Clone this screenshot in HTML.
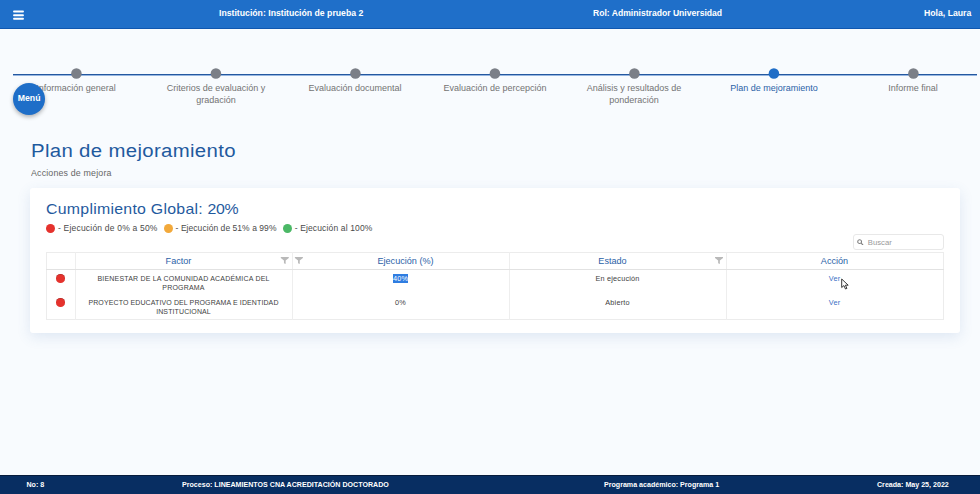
<!DOCTYPE html>
<html lang="es">
<head>
<meta charset="utf-8">
<title>Plan de mejoramiento</title>
<style>
*{box-sizing:border-box;margin:0;padding:0}
html,body{width:980px;height:494px;overflow:hidden}
body{background:#f8fbfe;font-family:"Liberation Sans",sans-serif;color:#444;position:relative}
.abs{position:absolute;white-space:nowrap}
#topbar{left:0;top:0;width:980px;height:28.8px;background:#1f6fc9;border-bottom:1px solid #0f57b0}
#topbar .t{position:absolute;top:0;height:27px;line-height:27px;color:#fff;font-size:8.7px;font-weight:700;white-space:nowrap}
#burger{left:13px;top:10px}
#line{left:13px;top:74px;width:963.5px;height:2px;background:linear-gradient(#2458a0 0,#2458a0 50%,rgba(70,125,200,.55) 50%,rgba(70,125,200,.55) 100%)}
.lbl{position:absolute;top:81.6px;width:140px;text-align:center;font-size:9px;line-height:12px;color:#737373;white-space:normal}
.lbl.on{color:#2b62a7}
#menu{left:13.1px;top:82.5px;width:32px;height:32px;border-radius:50%;background:#1e6ec8;box-shadow:0 2px 4px rgba(0,0,0,.3);color:#fff;font-size:8.7px;font-weight:700;text-align:center;line-height:31px}
#title{left:31px;top:138.8px;font-size:18px;line-height:24px;color:#1f5a9e;letter-spacing:.3px;transform:scaleX(1.131);transform-origin:0 0}
#sub{left:31px;top:168.7px;font-size:8.2px;line-height:10px;color:#666;letter-spacing:.15px;transform:scaleX(1.08);transform-origin:0 0}
#card{left:30px;top:188px;width:929.6px;height:144.7px;background:#fff;border-radius:3px;box-shadow:0 4px 14px rgba(70,110,180,.14)}
#h2{left:46px;top:200px;font-size:15px;line-height:18px;color:#1f5a9e;letter-spacing:.1px;transform:scaleX(1.058);transform-origin:0 0}
.lg{top:223.4px;font-size:8.5px;line-height:10px;color:#4a4a4a;letter-spacing:.2px}
.ld{position:absolute;width:9px;height:9px;border-radius:50%;top:223.5px}
#search{left:853px;top:234px;width:91px;height:15.6px;border:1px solid #e8e8e8;border-radius:3px;background:#fff}
#search span{position:absolute;left:13.8px;top:.6px;line-height:13.6px;font-size:7.7px;color:#999}
#tbl{left:46px;top:252px;width:898px;height:68px;border:1px solid #ececec}
.vl{position:absolute;top:252px;width:1px;height:68px;background:#eeeeee}
#hb{left:46px;top:268.6px;width:898px;height:1.6px;background:#e2e2e2}
.th{position:absolute;top:255px;font-size:9.1px;line-height:12px;color:#2b62a7;text-align:center;width:217px}
.td{position:absolute;font-size:7px;line-height:9px;color:#424242;text-align:center;width:217px;letter-spacing:.2px}
.td.m{font-size:7.3px}
.rd{position:absolute;left:56.2px;width:8.7px;height:8.7px;border-radius:50%;background:#e5322d;box-shadow:inset 0 .6px .5px rgba(90,20,20,.45)}
#footer{left:0;top:475px;width:980px;height:19px;background:#082e62;border-top:1.5px solid #071c3c}
#footer span{position:absolute;top:.9px;line-height:16.5px;font-size:7.1px;font-weight:700;color:#fff;white-space:nowrap}
</style>
</head>
<body>
<div id="topbar" class="abs">
  <svg id="burger" class="abs" width="12" height="11" viewBox="0 0 12 11"><rect x=".1" y=".5" width="10.8" height="2" rx=".8" fill="#fff"/><rect x=".1" y="4.2" width="10.8" height="2" rx=".8" fill="#fff"/><rect x=".1" y="7.8" width="10.8" height="2" rx=".8" fill="#fff"/></svg>
  <div class="t" id="t1" style="left:219px">Institución: Institución de prueba 2</div>
  <div class="t" id="t2" style="left:593px;font-size:8.6px">Rol: Administrador Universidad</div>
  <div class="t" id="t3" style="left:924px">Hola, Laura</div>
</div>

<div id="line" class="abs"></div>
<svg class="abs" style="left:0;top:0" width="980" height="120" viewBox="0 0 980 120"><circle cx="76.4" cy="73.55" r="5.25" fill="#7b7f87"/><circle cx="215.9" cy="73.55" r="5.25" fill="#7b7f87"/><circle cx="355.4" cy="73.55" r="5.25" fill="#7b7f87"/><circle cx="494.9" cy="73.55" r="5.25" fill="#7b7f87"/><circle cx="634.4" cy="73.55" r="5.25" fill="#7b7f87"/><circle cx="773.9" cy="73.55" r="5.25" fill="#1f6dc7"/><circle cx="913.4" cy="73.55" r="5.25" fill="#7b7f87"/></svg>
<div class="lbl" style="left:6px">Información general</div>
<div class="lbl" style="left:146px">Criterios de evaluación y gradación</div>
<div class="lbl" style="left:285px">Evaluación documental</div>
<div class="lbl" style="left:425px">Evaluación de percepción</div>
<div class="lbl" style="left:564px">Análisis y resultados de ponderación</div>
<div class="lbl on" style="left:704px">Plan de mejoramiento</div>
<div class="lbl" style="left:843px">Informe final</div>
<div id="menu" class="abs">Menú</div>

<div id="title" class="abs">Plan de mejoramiento</div>
<div id="sub" class="abs">Acciones de mejora</div>

<div id="card" class="abs"></div>
<div id="h2" class="abs"><span style="letter-spacing:.25px">Cumplimiento Global:</span> <span style="letter-spacing:-.35px">20%</span></div>
<div class="ld" style="left:45.5px;background:#e5322d"></div>
<div class="abs lg" id="l1" style="left:58px">- Ejecución de 0% a 50%</div>
<div class="ld" style="left:163.5px;background:#f2a93b"></div>
<div class="abs lg" id="l2" style="left:175.6px;letter-spacing:.05px">- Ejecución de 51% a 99%</div>
<div class="ld" style="left:283px;background:#4bb866"></div>
<div class="abs lg" id="l3" style="left:294.7px;letter-spacing:.14px">- Ejecución al 100%</div>

<div id="search" class="abs"><svg style="position:absolute;left:3px;top:3.6px" width="6.6" height="6.6" viewBox="0 0 8 8"><circle cx="3.2" cy="3.2" r="2.3" fill="none" stroke="#808080" stroke-width="1.3"/><path d="M5 5L7.3 7.3" stroke="#808080" stroke-width="1.4"/></svg><span>Buscar</span></div>

<div id="tbl" class="abs"></div>
<div class="vl" style="left:75px"></div>
<div class="vl" style="left:292px"></div>
<div class="vl" style="left:509px"></div>
<div class="vl" style="left:726px"></div>
<div id="hb" class="abs"></div>
<div class="th" style="left:70px">Factor</div>
<div class="th" style="left:297px">Ejecución (%)</div>
<div class="th" style="left:504px">Estado</div>
<div class="th" style="left:726px">Acción</div>

<div class="rd" style="top:274.2px"></div>
<div class="rd" style="top:298.4px"></div>
<div class="td" style="left:75px;top:274px;white-space:nowrap">BIENESTAR DE LA COMUNIDAD ACADÉMICA DEL<br>PROGRAMA</div>
<div class="td" style="left:75px;top:298px;white-space:nowrap;letter-spacing:.11px">PROYECTO EDUCATIVO DEL PROGRAMA E IDENTIDAD<br>INSTITUCIONAL</div>
<div class="td m" style="left:292px;top:274px"><span style="background:#2f7de1;color:#fff">40%</span></div>
<div class="td m" style="left:292px;top:298px">0%</div>
<div class="td m" style="left:509px;top:274px">En ejecución</div>
<div class="td m" style="left:509px;top:298px">Abierto</div>
<div class="td m" style="left:726px;top:274px;color:#3a6fc4">Ver</div>
<div class="td m" style="left:726px;top:298px;color:#3a6fc4">Ver</div>

<svg class="abs" style="left:0;top:0;pointer-events:none" width="980" height="494" viewBox="0 0 980 494">
<g fill="#b9b9b9">
<path transform="translate(280.8 256.9)" d="M0 0H8V1L4.85 3.7V7.1L3.15 6.3V3.7L0 1Z"/>
<path transform="translate(294.9 256.9)" d="M0 0H8V1L4.85 3.7V7.1L3.15 6.3V3.7L0 1Z"/>
<path transform="translate(715 256.9)" d="M0 0H8V1L4.85 3.7V7.1L3.15 6.3V3.7L0 1Z"/>
</g>
<path transform="translate(840.7 278)" d="M1 1V9.5L3.2 7.6L4.8 11L6.2 10.4L4.7 7.2H7.5Z" fill="#fff" stroke="#222" stroke-width=".9" stroke-linejoin="round"/>
</svg>

<div id="footer" class="abs">
  <span id="f1" style="left:26.5px">No: 8</span>
  <span id="f2" style="left:182px">Proceso: LINEAMIENTOS CNA ACREDITACIÓN DOCTORADO</span>
  <span id="f3" style="left:604px">Programa académico: Programa 1</span>
  <span id="f4" style="left:877px">Creada: May 25, 2022</span>
</div>
</body>
</html>
